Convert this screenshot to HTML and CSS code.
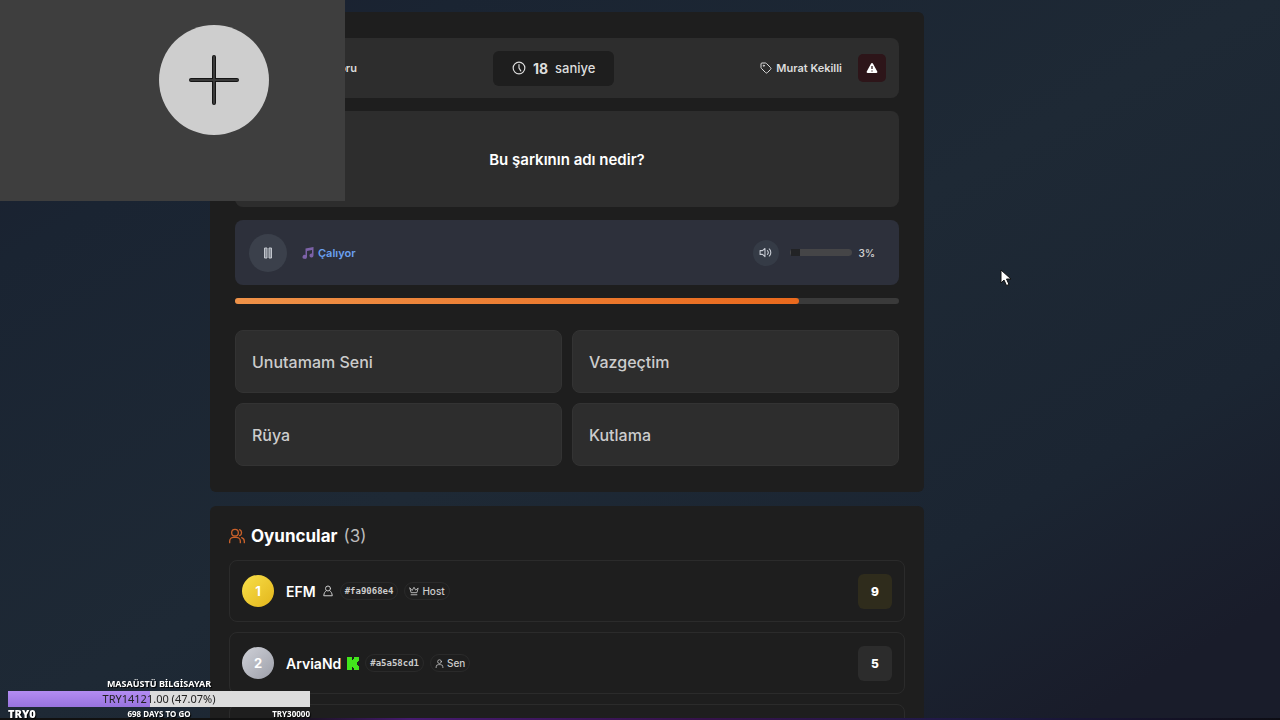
FILE: index.html
```html
<!DOCTYPE html>
<html lang="tr">
<head>
<meta charset="UTF-8">
<meta name="viewport" content="width=device-width, initial-scale=1.0">
<title>Şarkı Yarışması</title>
<link rel="stylesheet" href="styles.css">
</head>
<body>

<main class="page">
  <section class="card game">
    <header class="bar game-header">
      <span class="counter">Soru</span>
      <div class="timer">
        <svg width="14" height="14" viewBox="0 0 24 24" class="icon"><circle cx="12" cy="12" r="10"/><path d="M12 6v6l3 5"/></svg>
        <strong>18</strong>
        <span>saniye</span>
      </div>
      <div class="header-right">
        <span class="category">
          <svg width="12" height="12" viewBox="0 0 24 24" class="icon"><path d="M12.6 2.6A2 2 0 0 0 11.2 2H4a2 2 0 0 0-2 2v7.200a2 2 0 0 0 .6 1.400l8.700 8.700a2.400 2.400 0 0 0 3.400 0l6.600-6.600a2.400 2.400 0 0 0 0-3.400z"/><circle cx="7.500" cy="7.500" r="1"/></svg>
          Murat Kekilli
        </span>
        <button class="report" aria-label="Bildir">
          <svg width="12" height="12" viewBox="0 0 24 24"><path d="M12 2a2 2 0 0 0-1.800 1L1.500 19a2 2 0 0 0 1.800 3h17.400a2 2 0 0 0 1.800-3L13.800 3A2 2 0 0 0 12 2z" fill="#fff"/><path d="M12 8v6M12 17v2" stroke="#2d1519" stroke-width="2.500"/></svg>
        </button>
      </div>
    </header>

    <h1 class="bar question">Bu şarkının adı nedir?</h1>

    <div class="bar audio">
      <button class="pause" aria-label="Duraklat">
        <svg width="12" height="14" viewBox="0 0 12 14"><path d="M2.500 2h2.500v10H2.500zM7 2h2.500v10H7z" fill="#858a94" stroke="#c3c7ce"/></svg>
      </button>
      <span class="status">
        <svg width="12" height="12" viewBox="0 0 24 24"><path d="M7 3l16-3v17a4 4 0 1 1-3-4V6L10 8v12a4.500 4 0 1 1-3-4z" fill="#7d62a8"/></svg>
        Çalıyor
      </span>
      <button class="mute" aria-label="Sesi kapat">
        <svg width="13" height="13" viewBox="0 0 24 24" class="icon"><path d="M11 4.500L6.500 8.500H2v7h4.500l4.500 4zM15.500 8.500a5 5 0 0 1 0 7M19 5.500a9 9 0 0 1 0 13"/></svg>
      </button>
      <input class="volume" type="range" min="0" max="100" value="3" aria-label="Ses">
      <span class="percent">3%</span>
    </div>

    <div class="progress"><div class="progress-fill" style="width: 85%"></div></div>

    <div class="options">
      <button class="option">Unutamam Seni</button>
      <button class="option">Vazgeçtim</button>
      <button class="option">Rüya</button>
      <button class="option">Kutlama</button>
    </div>
  </section>

  <section class="card players">
    <h2 class="players-title">
      <svg width="16" height="16" viewBox="0 0 24 24" class="icon"><circle cx="9" cy="7" r="5"/><path d="M1 22v-2a6 6 0 0 1 6-6h4a6 6 0 0 1 6 6v2M16 2.500a5 5 0 0 1 0 9M19 14.500a6 6 0 0 1 4 5.500v2"/></svg>
      Oyuncular <span>(3)</span>
    </h2>
    <ul class="player-list">
      <li class="player">
        <span class="rank gold">1</span>
        <span class="name">EFM</span>
        <svg width="12" height="12" viewBox="0 0 24 24" class="icon"><circle cx="12" cy="7" r="5"/><path d="M8.500 11.500C6 13 4 16 3.500 21.500h17C20 16 18 13 15.500 11.500"/></svg>
        <span class="tag code">#fa9068e4</span>
        <span class="tag">
          <svg width="10" height="10" viewBox="0 0 24 24" class="icon"><path d="M2 5l3 11h14l3-11-6 5-4-7-4 7zM5 21h14"/></svg>
          Host
        </span>
        <span class="score gold-score">9</span>
      </li>
      <li class="player">
        <span class="rank silver">2</span>
        <span class="name">ArviaNd</span>
        <svg width="12" height="13" viewBox="0 0 12 13" class="kick"><path d="M0 0h5v3h1V2h1V0h5v4h-1v1h-1v3h1v1h1v4H7v-2H6v-1H5v3H0z"/></svg>
        <span class="tag code">#a5a58cd1</span>
        <span class="tag">
          <svg width="9" height="9" viewBox="0 0 24 24" class="icon"><circle cx="12" cy="7" r="5"/><path d="M3 23v-2a6 6 0 0 1 6-6h6a6 6 0 0 1 6 6v2"/></svg>
          Sen
        </span>
        <span class="score">5</span>
      </li>
      <li class="player"></li>
    </ul>
  </section>
</main>

<div class="camera">
  <div class="camera-circle">
    <svg width="50" height="50" viewBox="0 0 50 50"><path d="M25 2v46M2 25h46" stroke="#151515" stroke-width="4" stroke-linecap="round"/><path d="M25 2v46M2 25h46" stroke="#3a3a3a" stroke-width="2" stroke-linecap="round"/></svg>
  </div>
</div>

<div class="goal">
  <div class="goal-title">MASAÜSTÜ BİLGİSAYAR</div>
  <div class="goal-bar">
    <div class="goal-fill" style="width: 47.07%"></div>
    <span class="goal-text">TRY14121.00 (47.07%)</span>
  </div>
  <div class="goal-footer">
    <strong>TRY0</strong>
    <span>698 DAYS TO GO</span>
    <span>TRY30000</span>
  </div>
</div>

<div class="bottom-line"></div>

<svg class="cursor" width="12" height="18" viewBox="0 0 12 18"><path d="M1 1v13l3-3 2.500 5.500 2.500-1L6.500 10H11z" fill="#fff" stroke="#111"/></svg>

</body>
</html>
```
FILE: styles.css
```css
* {
  box-sizing: border-box;
}
body {
  margin: 0;
  height: 100vh;
  overflow: hidden;
  color: #fff;
  font-family: Inter, sans-serif;
  background: linear-gradient(150deg, #1a1e2e 0%, #1a2432 18%, #1e2935 50%, #1b2532 75%, #191c2a 92%);
}
button {
  border: none;
  padding: 0;
  color: inherit;
  font-family: inherit;
  cursor: pointer;
}
.icon {
  fill: none;
  stroke: currentColor;
  stroke-width: 2;
  stroke-linecap: round;
  stroke-linejoin: round;
  flex-shrink: 0;
}
.page {
  display: flex;
  flex-direction: column;
  align-items: center;
  gap: 14px;
  height: 100%;
  overflow: hidden;
  padding: 12px 146px 0 0;
}
.card {
  flex-shrink: 0;
  width: 100%;
  max-width: 714px;
  background-color: #1e1e1e;
  border-radius: 6px;
}
.game {
  display: flex;
  flex-direction: column;
  gap: 13px;
  padding: 26px 25px;
}
.bar {
  background-color: #2d2d2d;
  border-radius: 8px;
}
.game-header {
  display: flex;
  justify-content: space-between;
  align-items: center;
  height: 60px;
  padding: 0 13px;
  font-size: 11px;
  font-weight: 600;
  color: #ddd;
}
.counter {
  padding-left: 84px;
}
.timer {
  display: flex;
  align-items: center;
  gap: 7px;
  height: 35px;
  margin-right: 10px;
  padding: 0 19px;
  border-radius: 6px;
  background-color: #1e1e1e;
  font-size: 13px;
  font-weight: 500;
}
.timer strong {
  font-size: 14px;
  font-weight: 700;
}
.header-right {
  display: flex;
  align-items: center;
  gap: 16px;
}
.category {
  display: flex;
  align-items: center;
  gap: 4px;
}
.report {
  display: grid;
  place-items: center;
  width: 28px;
  height: 28px;
  border-radius: 5px;
  background-color: #2d1519;
}
.question {
  display: grid;
  place-items: center;
  height: 96px;
  margin: 0;
  font-size: 15px;
  font-weight: 600;
}
.audio {
  display: flex;
  align-items: center;
  height: 65px;
  padding: 0 24px 0 14px;
  background-color: #2d303b;
  font-size: 11px;
  font-weight: 600;
}
.pause,
.mute {
  display: grid;
  place-items: center;
  border-radius: 50%;
  color: #c8ccd4;
}
.pause {
  width: 38px;
  height: 38px;
  background-color: #3b404b;
}
.mute {
  width: 26px;
  height: 26px;
  margin-left: auto;
  background-color: #353b46;
}
.status {
  display: flex;
  align-items: center;
  gap: 4px;
  margin-left: 15px;
  color: #6ba0f0;
}
.volume {
  appearance: none;
  width: 62px;
  height: 7px;
  margin: 0 7px 0 11px;
  border-radius: 4px;
  background-color: #454547;
}
.volume::-webkit-slider-thumb {
  appearance: none;
  width: 9px;
  height: 7px;
  background-color: #222325;
}
.percent {
  color: #ccc;
  font-size: 10px;
}
.progress {
  height: 6px;
  border-radius: 3px;
  background-color: #3a3a3a;
}
.progress-fill {
  height: 100%;
  border-radius: 3px;
  background: linear-gradient(90deg, #ef9248, #e9691d);
}
.options {
  display: grid;
  grid-template-columns: 1fr 1fr;
  gap: 10px;
  margin-top: 13px;
}
.option {
  height: 63px;
  padding: 0 16px;
  border: 1px solid #333;
  border-radius: 8px;
  background-color: #2d2d2d;
  color: #ccc;
  font-size: 16px;
  font-weight: 500;
  text-align: left;
}
.players {
  padding: 18px 19px;
}
.players-title {
  display: flex;
  align-items: center;
  gap: 6px;
  height: 24px;
  margin: 0 0 12px;
  font-size: 17px;
  font-weight: 700;
}
.players-title .icon {
  color: #c9612a;
}
.players-title span {
  color: #bbb;
  font-weight: 400;
}
.player-list {
  display: flex;
  flex-direction: column;
  gap: 10px;
  margin: 0;
  padding: 0;
  list-style: none;
}
.player {
  display: flex;
  align-items: center;
  gap: 6px;
  height: 62px;
  padding: 0 12px;
  border: 1px solid #2b2b2b;
  border-radius: 8px;
  color: #ccc;
}
.rank {
  display: grid;
  place-items: center;
  width: 32px;
  height: 32px;
  margin-right: 6px;
  border-radius: 50%;
  color: #fff;
  font-size: 13px;
  font-weight: 700;
}
.gold {
  background: linear-gradient(135deg, #f8e04a, #e3b51b);
}
.silver {
  background: linear-gradient(135deg, #cfd1d8, #9d9fa9);
}
.name {
  color: #fff;
  font-size: 14px;
  font-weight: 600;
}
.kick {
  fill: #42e51c;
}
.tag {
  display: flex;
  align-items: center;
  gap: 3px;
  height: 18px;
  padding: 0 4px;
  border: 1px solid #2a2a2a;
  border-radius: 9px;
  font-size: 10px;
  font-weight: 500;
}
.code {
  font-family: "DejaVu Sans Mono", monospace;
  font-size: 9px;
  font-weight: 700;
}
.score {
  display: grid;
  place-items: center;
  width: 34px;
  height: 35px;
  margin-left: auto;
  border-radius: 6px;
  background-color: #2c2c2c;
  color: #fff;
  font-size: 12px;
  font-weight: 800;
}
.gold-score {
  background-color: #2f2c1c;
}

/* stream overlays */
.camera {
  position: fixed;
  top: 0;
  left: 0;
  display: flex;
  justify-content: flex-end;
  width: 345px;
  height: 201px;
  padding: 25px 76px;
  background-color: #3e3e3e;
}
.camera-circle {
  display: grid;
  place-items: center;
  width: 110px;
  height: 110px;
  border-radius: 50%;
  background-color: #cecece;
}
.goal {
  position: fixed;
  left: 8px;
  bottom: 0;
  z-index: 1;
  width: 302px;
  font-family: "Noto Sans", sans-serif;
  font-size: 8px;
  font-weight: 700;
  text-shadow: 1px 1px 1px #000;
}
.goal-title {
  font-size: 9px;
  line-height: 14px;
  text-align: center;
}
.goal-bar {
  display: grid;
  align-items: center;
  height: 16px;
  background-color: #dcdcdc;
}
.goal-fill,
.goal-text {
  grid-area: 1 / 1;
}
.goal-fill {
  height: 16px;
  background: linear-gradient(#b38cf2, #9873de);
}
.goal-text {
  color: #222;
  font-size: 11px;
  font-weight: 400;
  line-height: 16px;
  text-align: center;
  text-shadow: none;
}
.goal-footer {
  display: grid;
  grid-template-columns: 1fr auto 1fr;
  align-items: center;
  height: 13px;
  line-height: 12px;
}
.goal-footer strong {
  font-size: 11px;
}
.goal-footer span:last-child {
  text-align: right;
}
.bottom-line {
  position: fixed;
  right: 0;
  bottom: 0;
  left: 0;
  height: 2px;
  background: linear-gradient(90deg, #111 22%, #451a6e 32%, #35124a 55%, #1f1a48 75%, #0d0d14);
}
.cursor {
  position: fixed;
  top: 269px;
  left: 1000px;
}
```
